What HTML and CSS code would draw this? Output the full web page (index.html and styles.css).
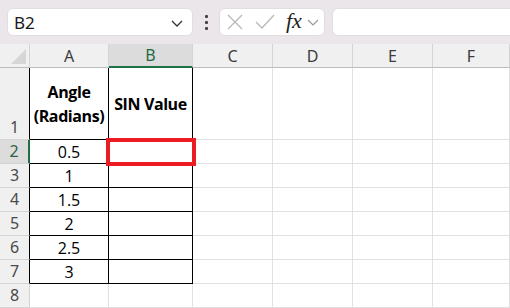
FILE: index.html
```html
<!DOCTYPE html>
<html>
<head>
<meta charset="utf-8">
<link rel="stylesheet" href="styles.css">
</head>
<body>
<div class="app">
  <div class="fbar">
    <div class="namebox">
      <span class="ref">B2</span>
      <svg class="chev" width="12" height="7" viewBox="0 0 12 7"><path d="M1 1 L6 6 L11 1" fill="none" stroke="#333" stroke-width="1.3"/></svg>
    </div>
    <div class="dots"><span></span><span></span><span></span></div>
    <div class="fbtns">
      <svg width="16" height="16" viewBox="0 0 16 16"><path d="M1 1 L15 15 M15 1 L1 15" stroke="#b8b8b8" stroke-width="1.3" fill="none"/></svg>
      <svg width="20" height="16" viewBox="0 0 20 16"><path d="M1 8 L7 14 L19 1" stroke="#b8b8b8" stroke-width="1.3" fill="none"/></svg>
      <span class="fx">fx</span>
      <svg width="12" height="7" viewBox="0 0 12 7"><path d="M1 1 L6 6 L11 1" fill="none" stroke="#999" stroke-width="1.2"/></svg>
    </div>
    <div class="finput"></div>
  </div>
  <div class="sheet">
    <div class="corner"><div class="tri"></div></div>
    <div class="ch">A</div>
    <div class="ch sel">B</div>
    <div class="ch">C</div>
    <div class="ch">D</div>
    <div class="ch">E</div>
    <div class="ch">F</div>

    <div class="rh tb">1</div>
    <div class="c t head">Angle<br>(Radians)</div>
    <div class="c t head">SIN Value</div>
    <div class="c"></div><div class="c"></div><div class="c"></div><div class="c"></div>

    <div class="rh sel">2</div>
    <div class="c t">0.5</div>
    <div class="c t"></div>
    <div class="c"></div><div class="c"></div><div class="c"></div><div class="c"></div>

    <div class="rh tb">3</div>
    <div class="c t">1</div>
    <div class="c t"></div>
    <div class="c"></div><div class="c"></div><div class="c"></div><div class="c"></div>

    <div class="rh tb">4</div>
    <div class="c t">1.5</div>
    <div class="c t"></div>
    <div class="c"></div><div class="c"></div><div class="c"></div><div class="c"></div>

    <div class="rh tb">5</div>
    <div class="c t">2</div>
    <div class="c t"></div>
    <div class="c"></div><div class="c"></div><div class="c"></div><div class="c"></div>

    <div class="rh tb">6</div>
    <div class="c t">2.5</div>
    <div class="c t"></div>
    <div class="c"></div><div class="c"></div><div class="c"></div><div class="c"></div>

    <div class="rh tb">7</div>
    <div class="c t">3</div>
    <div class="c t"></div>
    <div class="c"></div><div class="c"></div><div class="c"></div><div class="c"></div>

    <div class="rh">8</div>
    <div class="c"></div><div class="c"></div>
    <div class="c"></div><div class="c"></div><div class="c"></div><div class="c"></div>
  </div>
  <div class="selbox"></div>
</div>
</body>
</html>
```
FILE: styles.css
```css
* { box-sizing: border-box; }
html, body { margin: 0; padding: 0; }
body {
  width: 510px;
  height: 308px;
  overflow: hidden;
  background: #ffffff;
  font-family: "Open Sans", "Noto Sans", sans-serif;
  color: #000;
}
.app { position: relative; width: 510px; height: 308px; }

.fbar {
  height: 44px;
  background: #ebe6e9;
  display: flex;
  align-items: flex-start;
  padding: 8px 0 0 7px;
}
.namebox {
  width: 186px;
  height: 28px;
  background: #fff;
  border: 1px solid #e2dde0;
  border-radius: 6px;
  display: flex;
  align-items: center;
  justify-content: space-between;
  padding: 0 9px 0 6px;
}
.ref { font-size: 17px; color: #1a1a1a; font-family: "Noto Sans", sans-serif; }
.chev { margin-top: 2px; }
.dots {
  width: 26px;
  height: 28px;
  display: flex;
  flex-direction: column;
  align-items: center;
  justify-content: center;
  gap: 3px;
}
.dots span { width: 3px; height: 3px; background: #444; border-radius: 1px; }
.fbtns {
  width: 106px;
  height: 28px;
  background: #fff;
  border: 1px solid #e2dde0;
  border-radius: 6px;
  display: flex;
  align-items: center;
  padding: 0 0 0 7px;
}
.fbtns svg:nth-child(1) { margin-right: 12px; }
.fbtns svg:nth-child(2) { margin-right: 11px; }
.fx {
  font-family: "Liberation Serif", serif;
  font-style: italic;
  font-size: 22px;
  color: #222;
  margin-right: 5px;
  margin-top: -3px;
}
.finput {
  margin-left: 7px;
  flex: 1;
  height: 28px;
  background: #fff;
  border: 1px solid #e2dde0;
  border-right: none;
  border-radius: 6px 0 0 6px;
}

.sheet {
  display: grid;
  grid-template-columns: 30px 79px 84px 80px 80px 80px 1fr;
  grid-template-rows: 24px 72px repeat(7, 24px);
}
.corner {
  background: #f0f0f0;
  border-right: 1px solid #d4d4d4;
  border-bottom: 1px solid #bdbdbd;
  position: relative;
}
.tri {
  position: absolute;
  right: 3px;
  bottom: 3px;
  width: 0; height: 0;
  border-left: 15px solid transparent;
  border-bottom: 15px solid #d6d6d6;
}
.ch {
  background: #f0f0f0;
  border-right: 1px solid #d4d4d4;
  border-bottom: 1px solid #bdbdbd;
  display: flex;
  align-items: center;
  justify-content: center;
  font-size: 16px;
  color: #3c3c3c;
  font-family: "Noto Sans", sans-serif;
}
.ch.sel {
  background: #dcdcdc;
  border-bottom: 2px solid #1e7145;
  color: #1e6a43;
}
.rh {
  background: #f0f0f0;
  border-right: 1px solid #d4d4d4;
  border-bottom: 1px solid #d4d4d4;
  display: flex;
  align-items: flex-end;
  justify-content: center;
  font-size: 16px;
  line-height: 23px;
  color: #4a4a4a;
  font-family: "Noto Sans", sans-serif;
}
.rh.tb { border-right: 1px solid #000; }
.rh.sel {
  background: #dcdcdc;
  border-right: 2px solid #1e7145;
  color: #2f5f48;
}
.c {
  border-right: 1px solid #e1e1e1;
  border-bottom: 1px solid #e1e1e1;
}
.c.t {
  border-right: 1px solid #000;
  border-bottom: 1px solid #000;
  display: flex;
  align-items: center;
  justify-content: center;
  font-size: 16px;
  text-align: center;
}
.c.head {
  font-weight: 700;
  line-height: 24px;
  font-size: 16px;
  letter-spacing: -0.4px;
}

.selbox {
  position: absolute;
  left: 106px;
  top: 138px;
  width: 90px;
  height: 28px;
  border: 4px solid #ec1c24;
}
```
